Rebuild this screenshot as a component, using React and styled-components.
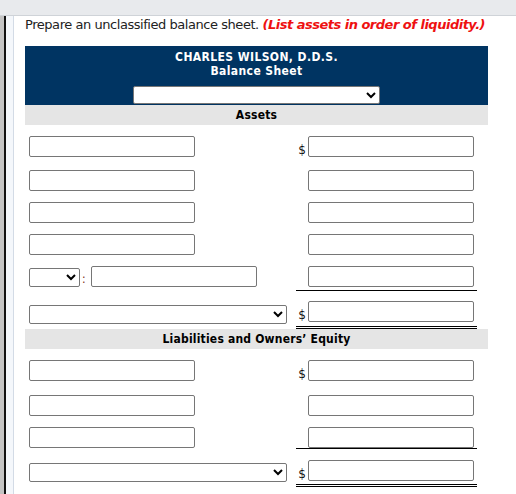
import React from "react";
import styled, { createGlobalStyle } from "styled-components";

const GlobalStyle = createGlobalStyle`
  body {
    margin: 0;
    background: #fff;
    font-family: "DejaVu Sans", Verdana, sans-serif;
  }
`;

function BalanceSheet() {
  return (
    <Page>
      <GlobalStyle />
      <TopBar />
      <Shell>
        <Gutter />
        <Rail />
        <Main>
          <Prompt>
            Prepare an unclassified balance sheet.{" "}
            <Hint>(List assets in order of liquidity.)</Hint>
          </Prompt>

          <Sheet>
            <SheetHead>
              <HeadLine>CHARLES WILSON, D.D.S.</HeadLine>
              <HeadLine>Balance Sheet</HeadLine>
              <DateSelect>
                <option></option>
              </DateSelect>
            </SheetHead>

            <Band>Assets</Band>

            <Row>
              <Label />
              <Amount>
                <Dollar>$</Dollar>
                <Field />
              </Amount>
            </Row>
            <Row top={13}>
              <Label />
              <Amount>
                <Field />
              </Amount>
            </Row>
            <Row>
              <Label />
              <Amount>
                <Field />
              </Amount>
            </Row>
            <Row>
              <Label />
              <Amount>
                <Field />
              </Amount>
            </Row>
            <Row>
              <Combo>
                <SmallSelect>
                  <option></option>
                </SmallSelect>
                <Colon>:</Colon>
                <Label />
              </Combo>
              <Amount rule="single" pad={3}>
                <Field />
              </Amount>
            </Row>
            <Row top={10}>
              <WideSelect drop={4}>
                <option></option>
              </WideSelect>
              <Amount rule="double" pad={4}>
                <Dollar>$</Dollar>
                <Field />
              </Amount>
            </Row>

            <Band>Liabilities and Owners’ Equity</Band>

            <Row>
              <Label />
              <Amount>
                <Dollar>$</Dollar>
                <Field />
              </Amount>
            </Row>
            <Row top={14}>
              <Label />
              <Amount>
                <Field />
              </Amount>
            </Row>
            <Row>
              <Label />
              <Amount rule="single">
                <Field />
              </Amount>
            </Row>
            <Row>
              <WideSelect drop={3}>
                <option></option>
              </WideSelect>
              <Amount rule="double" pad={3}>
                <Dollar>$</Dollar>
                <Field />
              </Amount>
            </Row>
          </Sheet>
        </Main>
      </Shell>
    </Page>
  );
}

const Page = styled.div`
  width: 516px;
  height: 494px;
  overflow: hidden;
  display: flex;
  flex-direction: column;
`;

const TopBar = styled.div`
  height: 15px;
  flex: none;
  background: #e8eaed;
  border-bottom: 1px solid #cfd3d8;
`;

const Shell = styled.div`
  flex: 1;
  display: flex;
`;

const Gutter = styled.div`
  width: 4px;
  background: #c4c4c4;
`;

const Rail = styled.div`
  width: 7px;
  background: #f4f7fb;
  border-left: 2px solid #111;
  border-right: 1px solid #d3dbe6;
`;

const Main = styled.div`
  flex: 1;
  padding: 1px 0 0 11px;
`;

const Prompt = styled.p`
  margin: 0;
  font-size: 13px;
  line-height: 16px;
  letter-spacing: -0.45px;
  white-space: nowrap;
  color: #222;
`;

const Hint = styled.span`
  color: #ee1111;
  font-weight: bold;
  font-style: italic;
  letter-spacing: -0.5px;
`;

const Sheet = styled.div`
  width: 463px;
  margin-top: 13px;
  font-family: "DejaVu Sans Condensed", "DejaVu Sans", sans-serif;
`;

const SheetHead = styled.div`
  background: #003462;
  color: #fff;
  padding: 4px 0 1px;
  display: flex;
  flex-direction: column;
  align-items: center;
`;

const HeadLine = styled.div`
  font-size: 12px;
  font-weight: bold;
  line-height: 14px;
  letter-spacing: 0.4px;
`;

const DateSelect = styled.select`
  margin-top: 8px;
  width: 247px;
  height: 18px;
  border: 1px solid #767676;
  border-radius: 2px;
  background: #fff;
`;

const Band = styled.div`
  height: 20px;
  background: #e5e5e5;
  color: #000;
  font-size: 12px;
  font-weight: bold;
  line-height: 20px;
  letter-spacing: 0.2px;
  text-align: center;
`;

const Row = styled.div`
  display: grid;
  grid-template-columns: 267px 181px;
  align-items: start;
  padding: ${({ top = 11 }) => top}px 0 0 4px;
`;

const Field = styled.input`
  box-sizing: border-box;
  width: 166px;
  height: 21px;
  margin: 0;
  border: 1px solid #767676;
  border-radius: 2px;
  background: #fff;
`;

const Label = styled(Field)`
  display: block;
`;

const Combo = styled.div`
  display: flex;
  align-items: flex-end;
`;

const SmallSelect = styled.select`
  width: 51px;
  height: 19px;
  margin: 0;
  border: 1px solid #767676;
  border-radius: 2px;
  background: #fff;
`;

const Colon = styled.span`
  width: 11px;
  padding-left: 2px;
  box-sizing: border-box;
  font-size: 12px;
  line-height: 16px;
  color: #7a2a10;
`;

const WideSelect = styled.select`
  width: 258px;
  height: 19px;
  margin: ${({ drop }) => drop}px 0 0;
  border: 1px solid #767676;
  border-radius: 2px;
  background: #fff;
`;

const Amount = styled.div`
  display: flex;
  align-items: flex-end;
  justify-content: flex-end;
  padding: 0 3px ${({ pad = 0 }) => pad}px 0;
  border-bottom: ${({ rule }) =>
    rule === "double" ? "3px double #000" : rule === "single" ? "1px solid #000" : "none"};
`;

const Dollar = styled.span`
  font-family: "DejaVu Sans", sans-serif;
  font-size: 12px;
  line-height: 14px;
  color: #111;
  margin-right: 2px;
`;

export default BalanceSheet;
